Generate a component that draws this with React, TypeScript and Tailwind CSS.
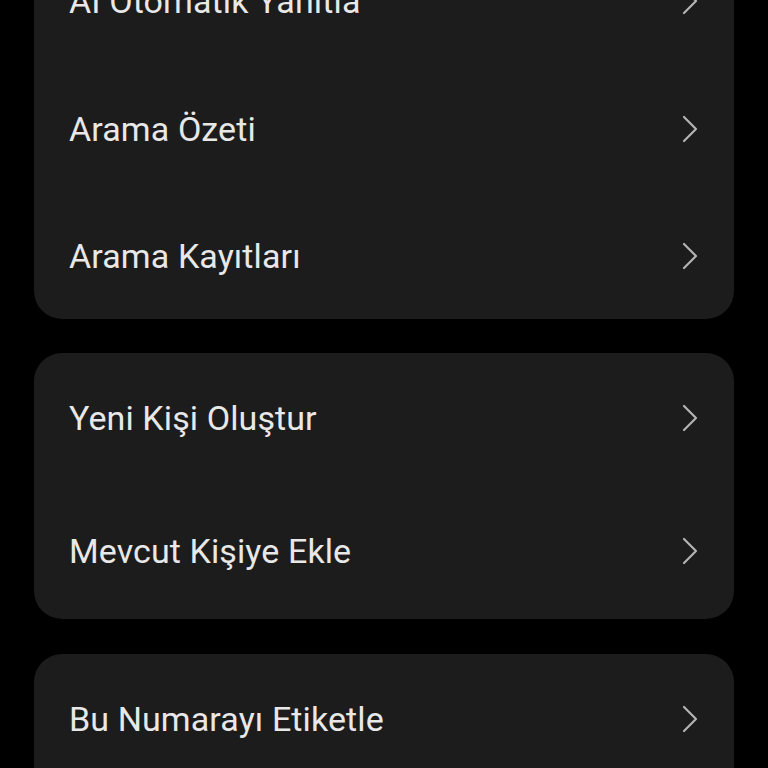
import React from "react";

function Chevron() {
  return (
    <svg width="18" height="28" viewBox="0 0 18 28" fill="none" className="shrink-0">
      <polyline points="3,2 15,14 3,26" stroke="#b3b3b3" strokeWidth="2.2" strokeLinecap="round" strokeLinejoin="round" />
    </svg>
  );
}

function Row({ label, h }: { label: string; h: string }) {
  return (
    <div className={`flex items-center justify-between pl-[35px] pr-[35px] ${h}`}>
      <span className="text-[34px] text-[#e8e8e8] leading-none tracking-[0.1px]" style={{ fontFamily: "Roboto, 'Noto Sans', sans-serif" }}>
        {label}
      </span>
      <Chevron />
    </div>
  );
}

export default function App() {
  return (
    <div className="w-[768px] h-[768px] overflow-hidden bg-black">
      <div className="flex flex-col px-[34px] -mt-[63px]">
        <div className="bg-[#1c1c1c] rounded-[28px] flex flex-col">
          <Row label="AI Otomatik Yanıtla" h="h-[128px]" />
          <Row label="Arama Özeti" h="h-[128px]" />
          <div className="pb-0">
            <Row label="Arama Kayıtları" h="h-[126px]" />
          </div>
        </div>
        <div className="bg-[#1c1c1c] rounded-[28px] flex flex-col mt-[34px]">
          <Row label="Yeni Kişi Oluştur" h="h-[130px]" />
          <Row label="Mevcut Kişiye Ekle" h="h-[136px]" />
        </div>
        <div className="bg-[#1c1c1c] rounded-[28px] flex flex-col mt-[35px] pb-[40px]">
          <Row label="Bu Numarayı Etiketle" h="h-[130px]" />
        </div>
      </div>
    </div>
  );
}
